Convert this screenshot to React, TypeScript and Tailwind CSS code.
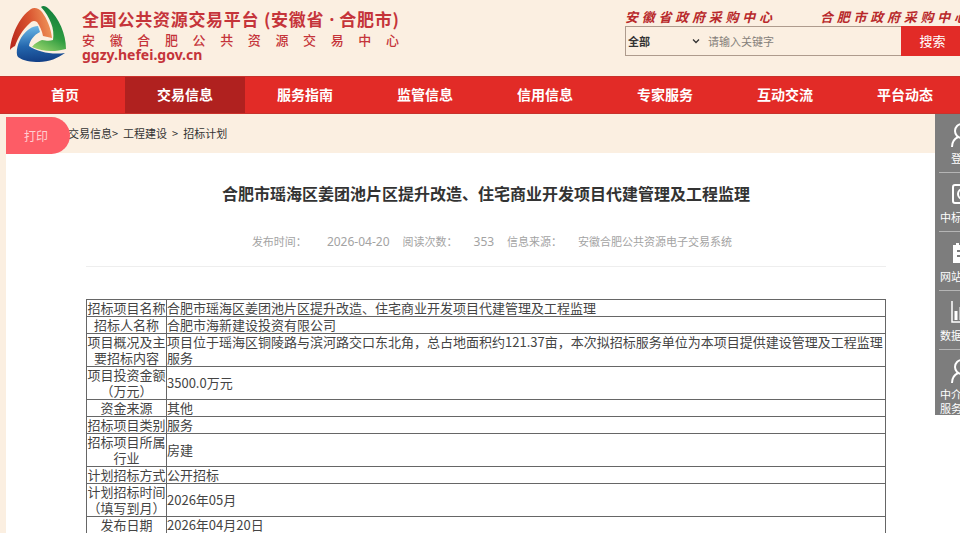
import React from 'react'

const navItems = ['首页', '交易信息', '服务指南', '监管信息', '信用信息', '专家服务', '互动交流', '平台动态']

const rows = [
  ['招标项目名称', '合肥市瑶海区姜团池片区提升改造、住宅商业开发项目代建管理及工程监理'],
  ['招标人名称', '合肥市海新建设投资有限公司'],
  ['项目概况及主要招标内容', '项目位于瑶海区铜陵路与滨河路交口东北角，总占地面积约121.37亩，本次拟招标服务单位为本项目提供建设管理及工程监理服务'],
  ['项目投资金额（万元）', '3500.0万元'],
  ['资金来源', '其他'],
  ['招标项目类别', '服务'],
  ['招标项目所属行业', '房建'],
  ['计划招标方式', '公开招标'],
  ['计划招标时间（填写到月）', '2026年05月'],
  ['发布日期', '2026年04月20日'],
]

function Logo() {
  return (
    <svg viewBox="0 0 65 65" className="h-[65px] w-[65px] shrink-0" aria-hidden="true">
      <defs>
        <linearGradient id="red" x1="0" y1="0.6" x2="1" y2="0.4">
          <stop offset="0" stopColor="#b92a1d" />
          <stop offset="0.5" stopColor="#d9532f" />
          <stop offset="1" stopColor="#f0985c" />
        </linearGradient>
        <linearGradient id="green" x1="0.7" y1="0" x2="0.3" y2="1">
          <stop offset="0" stopColor="#0d7a3c" />
          <stop offset="0.6" stopColor="#2f9c40" />
          <stop offset="1" stopColor="#8fd06a" />
        </linearGradient>
        <linearGradient id="blue" x1="0.3" y1="0" x2="0.4" y2="1">
          <stop offset="0" stopColor="#6db9e8" />
          <stop offset="0.55" stopColor="#2467ae" />
          <stop offset="1" stopColor="#123f86" />
        </linearGradient>
      </defs>
      <path d="M5 50C6 36 14 17 26 9C29 7 34 8 37 12C42 19 46 28 47 38L38 36C37 31 35 26 32 22C29 20 27 21 25 23C17 30 13 38 10 46C8 47 6 48 5 50Z" fill="url(#red)" />
      <path d="M36 7C38 5 41 6 44 9C54 18 61 34 61 49C50 52 38 52 27 47C30 43 34 41 37 40C42 41 45 41 48 40C50 29 45 17 36 7Z" fill="url(#green)" />
      <path d="M33 26L35 32C29 35 25 40 24 46C33 52 47 55 60 53C53 58 44 62 34 62C26 62 18 61 13 57C10 53 13 41 18 35C22 30 27 26 33 26Z" fill="url(#blue)" />
    </svg>
  )
}

function PersonIcon() {
  return (
    <svg viewBox="0 0 28 24" className="h-6 w-7" fill="none" stroke="white" strokeWidth="2">
      <circle cx="14" cy="8" r="7" />
      <path d="M4 24C4 19 6 16 10 14M24 24C24 19 22 16 18 14" />
    </svg>
  )
}

function FrameIcon() {
  return (
    <svg viewBox="0 0 28 24" className="h-6 w-7" fill="none" stroke="white" strokeWidth="2">
      <rect x="5" y="3" width="19" height="18" rx="2" />
      <circle cx="15" cy="12" r="5" />
    </svg>
  )
}

function NoteIcon() {
  return (
    <svg viewBox="0 0 28 24" className="h-6 w-7">
      <path d="M5 4H8V2H11V4H17V2H20V4H23V22H5Z" fill="white" />
      <path d="M9 10H19M9 15H19" stroke="#7d7d7d" strokeWidth="2" />
    </svg>
  )
}

function ChartIcon() {
  return (
    <svg viewBox="0 0 28 24" className="h-6 w-7" fill="none" stroke="white" strokeWidth="2">
      <path d="M4 1V22H25" strokeWidth="1.5" />
      <path d="M8 20V11M13 20V7M18 20V12" strokeWidth="3" />
    </svg>
  )
}

const sideItems = [
  { label: '登录', icon: <PersonIcon /> },
  { label: '中标查询', icon: <FrameIcon /> },
  { label: '网站声明', icon: <NoteIcon /> },
  { label: '数据统计', icon: <ChartIcon /> },
  { label: '中介超市服务大厅', icon: <PersonIcon /> },
]

function Header() {
  return (
    <header className="flex h-[76px] justify-between">
      <div className="flex pl-[5px]">
        <Logo />
        <div className="ml-3 w-[317px] pt-2 text-[#c5343a]">
          <div className="text-[17px] leading-[22px] font-bold whitespace-nowrap [text-align-last:justify]">
            全国公共资源交易平台 (安徽省<span className="font-['Noto_Sans']"> · </span>合肥市)
          </div>
          <div className="text-[13px] leading-[18px] font-medium [text-align-last:justify]">安徽合肥公共资源交易中心</div>
          <div className="font-['Noto_Sans'] text-sm leading-3 font-bold">ggzy.hefei.gov.cn</div>
        </div>
      </div>
      <div className="w-[335px] shrink-0 pt-[7px]">
        <div className="flex gap-12 text-[13px] leading-[19px] font-bold text-[#b8292b] italic">
          <a href="#" className="w-[147px] shrink-0 [text-align-last:justify]">安徽省政府采购中心</a>
          <a href="#" className="w-[147px] shrink-0 [text-align-last:justify]">合肥市政府采购中心</a>
        </div>
        <form className="flex h-[30px]">
          <div className="flex flex-1 items-center border border-r-0 border-[#ae9b8d]">
            <div className="relative flex items-center">
              <select aria-label="搜索范围" className="w-[78px] appearance-none bg-transparent pl-[2px] text-[11px] font-bold text-[#333]">
                <option>全部</option>
              </select>
              <svg viewBox="0 0 8 8" className="pointer-events-none absolute right-1 h-2 w-2" fill="none" stroke="#333" strokeWidth="1.3">
                <path d="M1 2.5L4 5.5L7 2.5" />
              </svg>
            </div>
            <input aria-label="关键字" placeholder="请输入关键字" className="w-0 flex-1 bg-transparent pl-1 text-[11px] outline-none placeholder:text-[#85807a]" />
          </div>
          <button type="button" className="w-[59px] bg-[#e22b27] pl-1 text-[13px] text-white">搜索</button>
        </form>
      </div>
    </header>
  )
}

function SideBar() {
  return (
    <aside className="absolute top-[114px] right-0 w-[25px] overflow-hidden bg-[#7d7d7d]">
      <ul className="flex w-[54px] flex-col px-1">
        {sideItems.map(({ label, icon }) => (
          <li key={label} className="border-b border-[#b5b5b5] last:border-b-0">
            <a href="#" className="flex min-h-[58px] flex-col items-center gap-1 pt-[9px] text-[11px] leading-[14px] text-white">
              {icon}
              <span className="text-center">{label}</span>
            </a>
          </li>
        ))}
      </ul>
    </aside>
  )
}

export default function App() {
  return (
    <div className="relative h-screen overflow-hidden bg-[#fbefe1] font-['Noto_Sans_CJK_SC',sans-serif]">
      <Header />

      <nav className="h-[38px] border-y border-[#c8322c] bg-[#e22b27]">
        <ul className="ml-[5px] flex h-full w-full">
          {navItems.map((item) => (
            <li key={item} className="w-1/8 shrink-0">
              <a
                href="#"
                className={`flex h-full items-center justify-center pb-0.5 text-sm font-bold text-white ${item === '交易信息' ? 'bg-[#b0211f]' : ''}`}
              >
                {item}
              </a>
            </li>
          ))}
        </ul>
      </nav>

      <div className="relative flex h-[39px] items-center pl-[68px] text-[11px] text-[#333]">
        <button type="button" className="absolute top-[3px] left-[6px] h-[37px] w-16 rounded-r-full bg-[#fd5c66] pr-1 text-xs text-[#ffd0d2]">
          打印
        </button>
        <div className="flex gap-[5px]">
          <span><a href="#">交易信息</a>&gt;</span>
          <a href="#">工程建设</a>
          <span>&gt;</span>
          <a href="#">招标计划</a>
        </div>
      </div>

      <main className="ml-[6px] w-full bg-white pb-10">
        <div className="mx-20">
          <h1 className="pt-7 text-center text-base leading-6 font-bold text-[#333]">
            合肥市瑶海区姜团池片区提升改造、住宅商业开发项目代建管理及工程监理
          </h1>
          <div className="flex h-[62px] items-center justify-center gap-[13px] border-b border-[#eee] pt-[13px] pl-3 font-['Noto_Sans','Noto_Sans_CJK_SC',sans-serif] text-[11px] text-[#a3a3a3]">
            <span className="flex items-center gap-5">发布时间：<span className="text-xs">2026-04-20</span></span>
            <span className="flex items-center gap-4">阅读次数：<span className="text-xs">353</span></span>
            <span className="flex items-center gap-4">信息来源：<span>安徽合肥公共资源电子交易系统</span></span>
          </div>
          <table className="mt-8 w-full border-collapse text-[13px] leading-4 text-[#444]">
            <tbody>
              {rows.map(([label, value]) => (
                <tr key={label}>
                  <th scope="row" className="w-20 border border-[#666] p-0 text-center font-normal">{label}</th>
                  <td className="border border-[#666] p-0">{value}</td>
                </tr>
              ))}
            </tbody>
          </table>
        </div>
      </main>

      <SideBar />
    </div>
  )
}
